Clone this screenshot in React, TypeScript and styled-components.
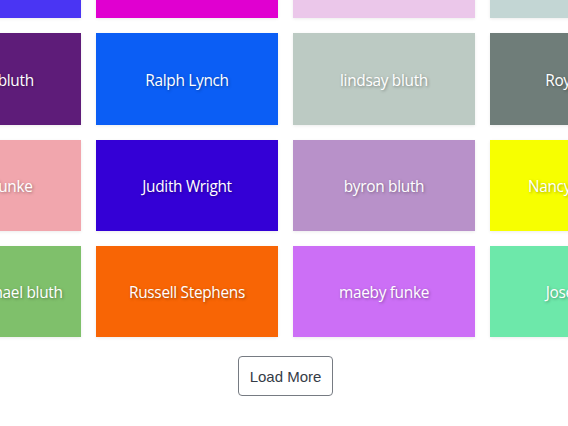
import React from "react";
import styled, { createGlobalStyle } from "styled-components";

const Global = createGlobalStyle`
  html, body {
    margin: 0;
    padding: 0;
    background: #ffffff;
    overflow: hidden;
  }
  body {
    font-family: "Open Sans", "Liberation Sans", sans-serif;
  }
`;

const Page = styled.main`
  width: 568px;
  height: 426px;
  overflow: hidden;
  display: flex;
  flex-direction: column;
  align-items: center;
  padding-left: 3px;
  box-sizing: border-box;
`;

const Grid = styled.section`
  margin-top: -73px;
  display: grid;
  grid-template-columns: repeat(4, 182.5px);
  grid-auto-rows: 91.25px;
  column-gap: 14.5px;
  row-gap: 15px;
  flex-shrink: 0;
`;

const Card = styled.div<{ $bg: string }>`
  background: ${(p) => p.$bg};
  display: flex;
  align-items: center;
  justify-content: center;
  padding-top: 3px;
  box-sizing: border-box;
  box-shadow: 0 1px 3px rgba(0, 0, 0, 0.08);
  color: #ffffff;
  font-family: "Open Sans", sans-serif;
  font-size: 15.4px;
  font-weight: 500;
  letter-spacing: -0.3px;
  white-space: nowrap;
  text-shadow: 1px 1px 3px rgba(0, 0, 0, 0.35);
`;

const LoadMore = styled.button`
  margin-top: 19px;
  width: 95px;
  height: 40px;
  background: #ffffff;
  border: 1px solid #767b82;
  border-radius: 4px;
  color: #353c47;
  font-family: "Liberation Sans", Arial, sans-serif;
  font-size: 15px;
  padding: 0;
  cursor: pointer;
  flex-shrink: 0;
`;

const people: { name: string; bg: string }[] = [
  { name: "buster bluth", bg: "#4a35f3" },
  { name: "Carl Perkins", bg: "#e000d0" },
  { name: "lucille bluth", bg: "#ebc7ea" },
  { name: "Alice Turner", bg: "#c3d6d4" },
  { name: "george bluth", bg: "#5e1c79" },
  { name: "Ralph Lynch", bg: "#0b5ef5" },
  { name: "lindsay bluth", bg: "#bccac3" },
  { name: "Roy Myers", bg: "#6f7d79" },
  { name: "tobias funke", bg: "#f1a6ad" },
  { name: "Judith Wright", bg: "#3400d6" },
  { name: "byron bluth", bg: "#b891c9" },
  { name: "Nancy Edwards", bg: "#f7ff00" },
  { name: "george michael bluth", bg: "#7fc06b" },
  { name: "Russell Stephens", bg: "#f86505" },
  { name: "maeby funke", bg: "#cc6ff6" },
  { name: "Jose Perez", bg: "#6de8aa" },
];

export default function App() {
  return (
    <>
      <Global />
      <Page>
        <Grid>
          {people.map((p) => (
            <Card key={p.name} $bg={p.bg}>
              {p.name}
            </Card>
          ))}
        </Grid>
        <LoadMore>Load More</LoadMore>
      </Page>
    </>
  );
}
